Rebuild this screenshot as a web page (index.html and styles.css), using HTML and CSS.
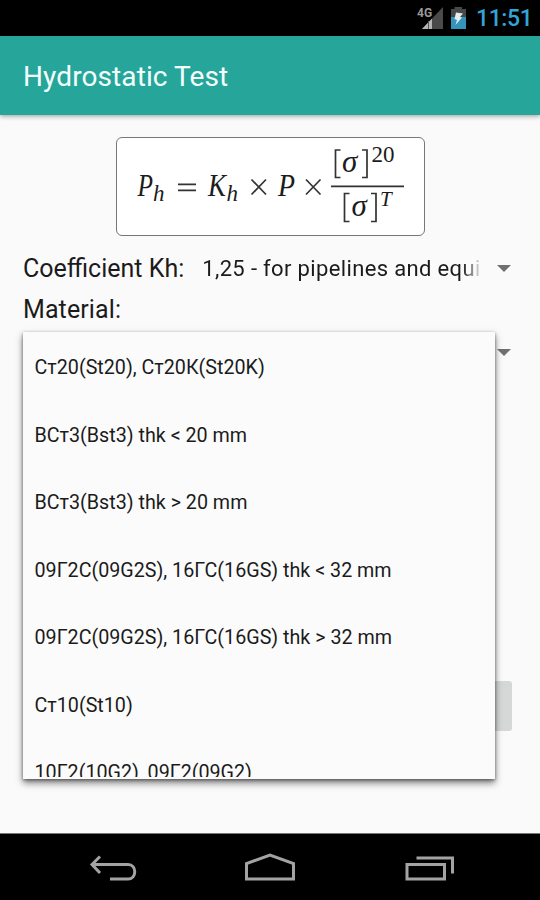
FILE: index.html
```html
<!DOCTYPE html>
<html lang="en">
<head>
    <meta charset="UTF-8">
    <title>Hydrostatic Test</title>
    <link rel="stylesheet" href="styles.css">
</head>
<body>
    <div class="status-bar">
        <svg class="signal" width="28" height="24" viewBox="0 0 28 24">
            <path d="M25 1 V23 H4 Z" fill="#4a4a4a"/>
            <path d="M14 12.500 V23 H4 Z" fill="#b5b5b5"/>
            <path d="M10.500 15 V23" stroke="#555" stroke-width="1"/>
            <text x="-1" y="11" class="network">4G</text>
        </svg>
        <svg class="battery" width="17" height="24" viewBox="0 0 17 24">
            <path d="M1 3 H4.500 V1 H12 V3 H16 V23 H1 Z" fill="#484848"/>
            <path d="M1 11 H16 V23 H1 Z" fill="#3494bb"/>
            <path d="M6 6.500 L13 7.500 L10 11 L12 11.500 L5.500 19 L7 14 L4.500 13 Z" fill="#e4eef2"/>
        </svg>
        <span class="clock">11:51</span>
    </div>
    <div class="action-bar">
        <h1>Hydrostatic Test</h1>
    </div>
    <div class="content">
        <div class="formula">
            <svg width="306" height="96" viewBox="117 138 306 96">
                <g class="math">
                    <text x="137.500" y="196" textLength="15.500" lengthAdjust="spacingAndGlyphs">P</text>
                    <text x="153" y="201" class="sub">h</text>
                    <text x="208" y="196" textLength="18" lengthAdjust="spacingAndGlyphs">K</text>
                    <text x="226.500" y="201" class="sub">h</text>
                    <text x="278" y="196" textLength="17" lengthAdjust="spacingAndGlyphs">P</text>
                    <text x="342" y="172">σ</text>
                    <text x="351.500" y="216">σ</text>
                    <text x="380" y="206" class="sup">T</text>
                    <text x="371.500" y="162" class="sup num">20</text>
                </g>
                <g class="lines">
                    <path d="M178 184.300 H196 M178 190.300 H196"/>
                    <path d="M251.500 179.500 L266 194.500 M266 179.500 L251.500 194.500"/>
                    <path d="M306 179.500 L320.500 194.500 M320.500 179.500 L306 194.500"/>
                    <path d="M331 186.300 H404"/>
                    <path d="M340.500 150 H335.500 V177.500 H340.500 M362 150 H367 V177.500 H362"/>
                    <path d="M349.500 193.500 H344.500 V221.500 H349.500 M371 193.500 H376 V221.500 H371"/>
                </g>
            </svg>
        </div>
        <div class="row">
            <span class="label">Coefficient Kh:</span>
            <div class="spinner"><span class="value">1,25 - for pipelines and equi</span></div>
            <span class="arrow"></span>
        </div>
        <div class="label material">Material:</div>
        <div class="row material-row">
            <span class="arrow"></span>
        </div>
        <div class="button"></div>
        <div class="dropdown">
            <ul>
                <li>Ст20(St20), Ст20К(St20K)</li>
                <li>ВСт3(Bst3) thk &lt; 20 mm</li>
                <li>ВСт3(Bst3) thk &gt; 20 mm</li>
                <li>09Г2С(09G2S), 16ГС(16GS) thk &lt; 32 mm</li>
                <li>09Г2С(09G2S), 16ГС(16GS) thk &gt; 32 mm</li>
                <li>Ст10(St10)</li>
                <li>10Г2(10G2), 09Г2(09G2)</li>
            </ul>
        </div>
    </div>
    <div class="nav-bar">
        <svg width="50" height="32" viewBox="0 0 50 32">
            <path d="M13 3.500 L5 11.500 L13 20 M5 11.500 H41 C50 11.500 50 26 41 26 H23"/>
        </svg>
        <svg width="54" height="32" viewBox="0 0 54 32">
            <path d="M3.500 26 V10.500 L27 2 L50.500 10.500 V26 Z"/>
        </svg>
        <svg width="54" height="32" viewBox="0 0 54 32">
            <path d="M4 11.500 H41.500 V26 H4 Z M13.500 5 H49.500 V20.500"/>
        </svg>
    </div>
</body>
</html>
```

FILE: styles.css
```css
body {
    margin: 0;
    width: 540px;
    height: 900px;
    display: flex;
    flex-direction: column;
    overflow: hidden;
    font-family: Roboto, sans-serif;
    background-color: #fafafa;
    color: #1b1b1b;
}
.status-bar {
    height: 36px;
    display: flex;
    align-items: center;
    justify-content: flex-end;
    padding-right: 10px;
    background-color: #000;
}
.signal {
    margin-right: 4px;
    overflow: visible;
}
.network {
    font-size: 12px;
    font-weight: bold;
    fill: #999;
    stroke: #000;
    stroke-width: 2px;
    paint-order: stroke;
}
.battery {
    margin-right: 9px;
}
.clock {
    width: 54px;
    font-size: 23px;
    font-weight: 500;
    line-height: 37px;
    letter-spacing: -0.4px;
    color: #33a5d5;
}
.action-bar {
    height: 79px;
    margin-bottom: -1px;
    display: flex;
    align-items: center;
    padding-left: 23px;
    background-color: #26a69a;
    box-shadow: 0 1px 5px rgba(0, 0, 0, 0.4);
}
h1 {
    margin: 1px 0 0;
    font-size: 28px;
    font-weight: normal;
    letter-spacing: 0.1px;
    color: #f4fffd;
}
.content {
    position: relative;
    flex: 1;
    display: flex;
    flex-direction: column;
    padding: 23px 28px 0 23px;
}
.formula {
    align-self: center;
    width: 307px;
    height: 97px;
    margin-left: 5px;
    border: 1px solid #777;
    border-radius: 6px;
    background-color: #fff;
}
.math {
    font-family: "Liberation Serif", serif;
    font-style: italic;
    font-size: 31px;
    fill: #1c1c1c;
}
.sub {
    font-size: 23px;
}
.sup {
    font-size: 21px;
}
.num {
    font-style: normal;
    font-size: 23px;
}
.lines {
    fill: none;
    stroke: #333;
    stroke-width: 1.7;
}
.row {
    display: flex;
    align-items: center;
    height: 42px;
    margin-top: 12px;
}
.label {
    font-size: 25px;
    line-height: 40px;
    letter-spacing: 0.1px;
    white-space: nowrap;
}
.row .label {
    letter-spacing: 0;
}
.spinner {
    flex: 1;
    overflow: hidden;
    white-space: nowrap;
    margin: 0 12px 0 18px;
    font-size: 22px;
    line-height: 40px;
    letter-spacing: 0.35px;
    -webkit-mask-image: linear-gradient(to right, #000 92%, transparent 99%);
    mask-image: linear-gradient(to right, #000 92%, transparent 99%);
}
.arrow {
    border: 7px solid transparent;
    border-top-color: #707070;
    border-bottom: 0;
    margin: 0 1px 1px 0;
}
.material {
    margin-top: 0;
}
.material-row {
    justify-content: flex-end;
    margin-top: 2px;
}
.button {
    width: 120px;
    height: 50px;
    margin-top: 307px;
    align-self: flex-end;
    border-radius: 3px;
    background-color: #d6d7d7;
}
.dropdown {
    position: absolute;
    left: 23px;
    top: 218px;
    width: 472px;
    height: 445px;
    padding-bottom: 2px;
    background-color: #fbfbfb;
    box-shadow: 0 4px 7px rgba(0, 0, 0, 0.5), 0 1px 3px rgba(0, 0, 0, 0.4);
}
ul {
    height: 445px;
    margin: 0;
    padding: 0;
    overflow: hidden;
    list-style: none;
}
li {
    height: 67.5px;
    padding-left: 11.5px;
    font-size: 19.7px;
    line-height: 72px;
    white-space: nowrap;
}
.nav-bar {
    height: 67px;
    flex: none;
    display: flex;
    align-items: center;
    justify-content: center;
    gap: 106px;
    padding: 3px 0 0 4px;
    border-top: 1px solid #777;
    box-sizing: border-box;
    background-color: #000;
}
.nav-bar path {
    fill: none;
    stroke: #a3a3a3;
    stroke-width: 3;
}
```
